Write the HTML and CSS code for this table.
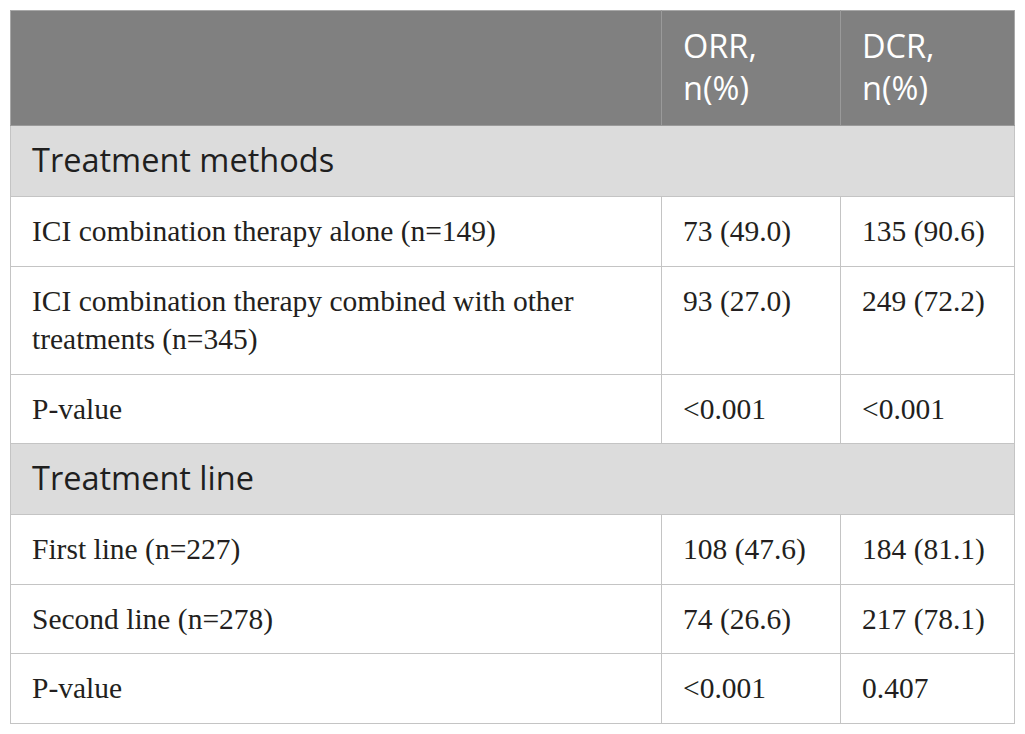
FILE: index.html
```html
<!DOCTYPE html>
<html>
<head>
<meta charset="utf-8">
<link rel="stylesheet" href="styles.css">
</head>
<body>
<table class="data">
  <colgroup>
    <col class="c1">
    <col class="c2">
    <col class="c3">
  </colgroup>
  <thead>
    <tr class="head">
      <th></th>
      <th>ORR,<br>n(%)</th>
      <th>DCR,<br>n(%)</th>
    </tr>
  </thead>
  <tbody>
    <tr class="section"><td colspan="3">Treatment methods</td></tr>
    <tr><td>ICI combination therapy alone (n=149)</td><td>73 (49.0)</td><td>135 (90.6)</td></tr>
    <tr><td>ICI combination therapy combined with other treatments (n=345)</td><td>93 (27.0)</td><td>249 (72.2)</td></tr>
    <tr><td>P-value</td><td>&lt;0.001</td><td>&lt;0.001</td></tr>
    <tr class="section"><td colspan="3">Treatment line</td></tr>
    <tr><td>First line (n=227)</td><td>108 (47.6)</td><td>184 (81.1)</td></tr>
    <tr><td>Second line (n=278)</td><td>74 (26.6)</td><td>217 (78.1)</td></tr>
    <tr><td>P-value</td><td>&lt;0.001</td><td>0.407</td></tr>
  </tbody>
</table>
</body>
</html>
```
FILE: styles.css
```css
html, body {
  margin: 0;
  padding: 0;
  background: #ffffff;
}
body {
  padding: 10px;
}
.data {
  border-collapse: collapse;
  table-layout: fixed;
  width: 1004px;
  font-family: "Liberation Serif", "Times New Roman", serif;
  font-size: 29.5px;
  line-height: 38.5px;
  color: #231f20;
}
.c1 { width: 651px; }
.c2 { width: 179px; }
.c3 { width: 174px; }
.data td, .data th {
  border: 1px solid #c4c4c4;
  padding: 15px 20px 15px 21px;
  text-align: left;
  vertical-align: top;
}
.head th {
  background: #808080;
  color: #ffffff;
  font-family: "Open Sans", "Noto Sans", sans-serif;
  font-weight: 400;
  font-size: 32.5px;
  line-height: 42px;
  padding-top: 14px;
  padding-bottom: 16px;
  border-color: #9a9a9a;
  border-top-color: #a8a8a8;
}
.head th:first-child { border-left-color: #a8a8a8; }
.head th:last-child { border-right-color: #a8a8a8; }
.section td {
  background: #dcdcdc;
  font-family: "Open Sans", "Noto Sans", sans-serif;
  font-size: 32.5px;
  line-height: 40px;
  padding-top: 14px;
  padding-bottom: 16px;
  color: #1f1f1f;
}
```
